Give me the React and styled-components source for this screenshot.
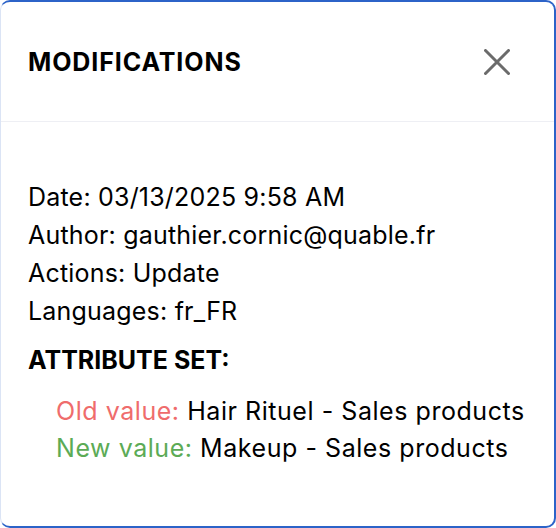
import React from 'react';
import styled, { createGlobalStyle } from 'styled-components';

const GlobalStyle = createGlobalStyle`
    html, body {
        margin: 0;
        padding: 0;
        background: #ffffff;
    }
    body {
        font-family: Inter, "Noto Sans", sans-serif;
        color: #000;
    }
`;

const Modal = styled.div`
    box-sizing: border-box;
    width: 556px;
    height: 528px;
    background: #fff;
    border: 2px solid #2c63c8;
    border-left: 1px solid #dbe4f5;
    border-radius: 10px;
    overflow: hidden;
`;

const Header = styled.div`
    box-sizing: border-box;
    height: 120px;
    display: flex;
    align-items: center;
    justify-content: space-between;
    padding: 0 44px 0 27px;
    border-bottom: 1px solid #eeeff4;
`;

const Title = styled.h2`
    margin: 0;
    font-size: 25px;
    font-weight: 700;
    letter-spacing: 0.9px;
`;

const CloseButton = styled.button`
    border: none;
    background: none;
    padding: 0;
    width: 26px;
    height: 26px;
    cursor: pointer;
    display: flex;
`;

const Body = styled.div`
    padding: 56px 27px 0;
    font-size: 25px;
    letter-spacing: 0.2px;
`;

const Line = styled.div`
    line-height: 38px;
`;

const Section = styled.div`
    margin-top: 11px;
    font-weight: 700;
    line-height: 38px;
    letter-spacing: 0;
`;

const Changes = styled.div`
    padding: 14px 0 0 28px;
`;

const Change = styled.div`
    line-height: 37px;
    white-space: nowrap;
    letter-spacing: 0.55px;

    .label {
        color: ${p => (p.$kind === 'old' ? '#ef6c6c' : '#5cab56')};
    }
`;

export default function App() {
    return (
        <>
            <GlobalStyle />
            <Modal>
                <Header>
                    <Title>MODIFICATIONS</Title>
                    <CloseButton aria-label="Close">
                        <svg width="26" height="26" viewBox="0 0 26 26">
                            <path d="M1.5 1.5 L24.5 24.5 M24.5 1.5 L1.5 24.5" stroke="#6b6b6b" strokeWidth="3" strokeLinecap="round" />
                        </svg>
                    </CloseButton>
                </Header>
                <Body>
                    <Line>Date: 03/13/2025 9:58 AM</Line>
                    <Line>Author: gauthier.cornic@quable.fr</Line>
                    <Line>Actions: Update</Line>
                    <Line>Languages: fr_FR</Line>
                    <Section>ATTRIBUTE SET:</Section>
                    <Changes>
                        <Change $kind="old"><span className="label">Old value:</span> Hair Rituel - Sales products</Change>
                        <Change $kind="new"><span className="label">New value:</span> Makeup - Sales products</Change>
                    </Changes>
                </Body>
            </Modal>
        </>
    );
}
